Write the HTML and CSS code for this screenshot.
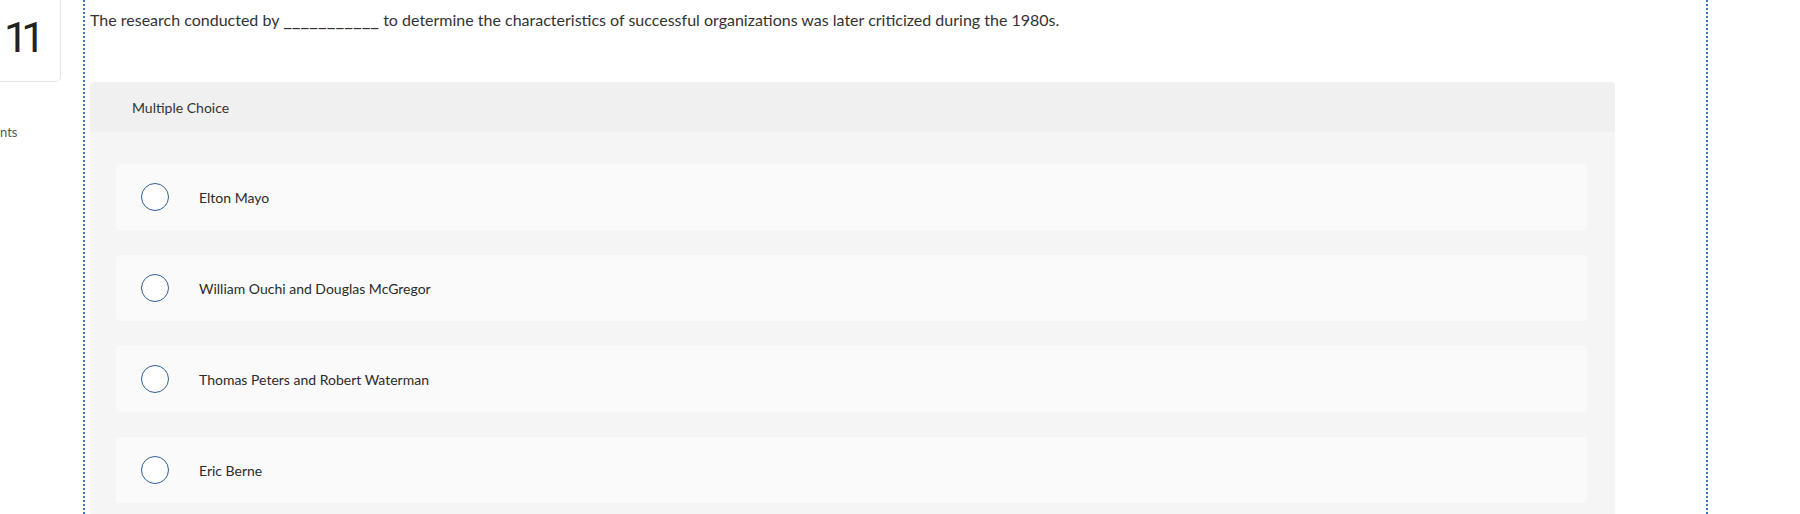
FILE: index.html
```html
<!DOCTYPE html>
<html lang="en">
<head>
<meta charset="utf-8">
<title>Question 11</title>
<link rel="stylesheet" href="styles.css">
</head>
<body>
<div class="page">
  <aside class="side">
    <div class="num-card"><span class="num">11</span></div>
    <div class="points">nts</div>
  </aside>
  <main class="question">
    <p class="prompt">The research conducted by <span class="blank">___________</span> to determine the characteristics of successful organizations was later criticized during the 1980s.</p>
    <section class="panel">
      <header class="panel-head">Multiple Choice</header>
      <div class="panel-body">
        <div class="option"><span class="radio"></span><span class="label">Elton Mayo</span></div>
        <div class="option"><span class="radio"></span><span class="label">William Ouchi and Douglas McGregor</span></div>
        <div class="option"><span class="radio"></span><span class="label">Thomas Peters and Robert Waterman</span></div>
        <div class="option"><span class="radio"></span><span class="label">Eric Berne</span></div>
      </div>
    </section>
  </main>
</div>
</body>
</html>
```
FILE: styles.css
```css
html, body {
  margin: 0;
  padding: 0;
  background: #ffffff;
  height: 514px;
  overflow: hidden;
}
body {
  font-family: Lato, "Liberation Sans", sans-serif;
  color: #2b2b2b;
}
.page {
  display: flex;
  align-items: stretch;
  height: 514px;
}
.side {
  width: 83px;
  flex: none;
  overflow: hidden;
}
.num-card {
  width: 100px;
  height: 102px;
  margin-top: -20px;
  margin-left: -39px;
  border: 1px solid #e6e6e6;
  border-radius: 5px;
  box-sizing: border-box;
  display: flex;
  align-items: flex-end;
  padding-bottom: 22px;
  padding-left: 42px;
}
.num {
  font-family: Roboto, "Liberation Sans", sans-serif;
  font-weight: 400;
  font-size: 43px;
  line-height: 1;
  color: #222;
  letter-spacing: -7px;
}
.points {
  margin-top: 42px;
  margin-left: 0;
  font-size: 13px;
  color: #555;
}
.question {
  width: 1616px;
  flex: none;
  border-left: 2px dotted #3a75c4;
  border-right: 2px dotted #3a75c4;
  padding-left: 5px;
  box-sizing: content-box;
}
.prompt {
  margin: 0;
  padding-top: 9px;
  font-size: 16px;
  line-height: 22px;
  color: #333;
}
.blank {
  font-size: 19px;
  line-height: 1;
}
.panel {
  margin-top: 51px;
  width: 1525px;
  border-radius: 4px;
  overflow: hidden;
}
.panel-head {
  height: 50px;
  background: #f0f0f0;
  padding-left: 42px;
  display: flex;
  align-items: center;
  font-size: 14px;
  color: #333;
}
.panel-body {
  background: #f5f5f5;
  padding: 32px 28px 40px 26px;
  display: flex;
  flex-direction: column;
  gap: 25px;
}
.option {
  height: 66px;
  background: #fafafa;
  border-radius: 4px;
  display: flex;
  align-items: center;
  padding-left: 25px;
}
.radio {
  width: 28px;
  height: 28px;
  box-sizing: border-box;
  border: 1.5px solid #2e5f94;
  border-radius: 50%;
  background: #fff;
  flex: none;
}
.label {
  margin-left: 30px;
  font-size: 14px;
  color: #2b2b2b;
}
```
